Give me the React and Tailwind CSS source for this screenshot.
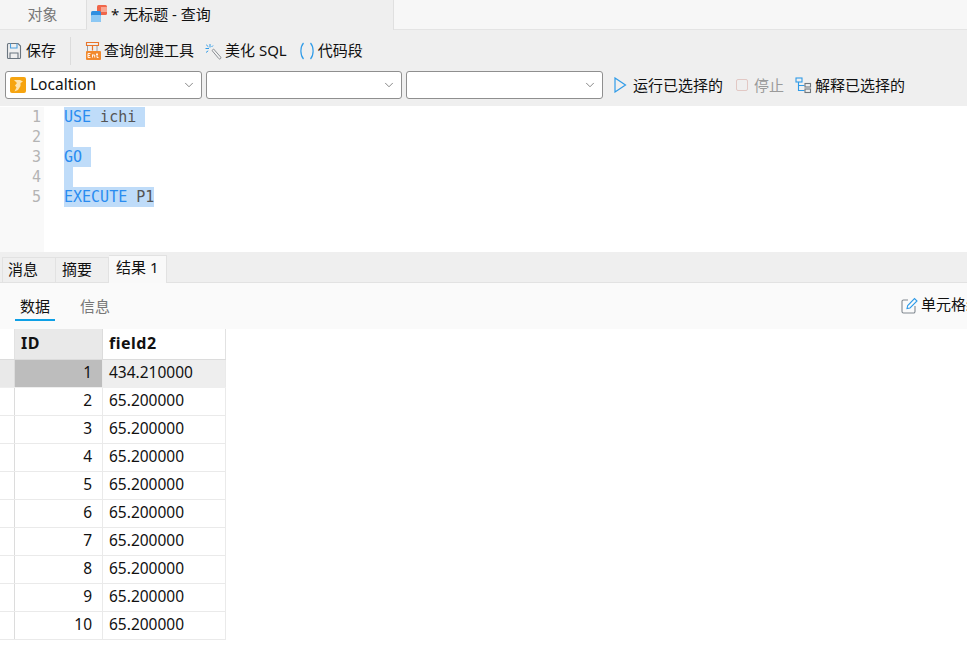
import { ChevronDown } from 'lucide-react';

const rows = [
  ['1', '434.210000'],
  ['2', '65.200000'],
  ['3', '65.200000'],
  ['4', '65.200000'],
  ['5', '65.200000'],
  ['6', '65.200000'],
  ['7', '65.200000'],
  ['8', '65.200000'],
  ['9', '65.200000'],
  ['10', '65.200000'],
];

function SaveIcon() {
  return (
    <svg width="16" height="18" viewBox="0 0 16 18" fill="none" stroke="#6b7680" strokeWidth="1.1">
      <path d="M2.5 1.5h9.5l2.5 2.5v11.5a1 1 0 0 1-1 1h-11a1 1 0 0 1-1-1v-13a1 1 0 0 1 1-1z" />
      <path d="M4.5 1.5v4.5h6.5v-4.5" stroke="#4a9fe0" />
      <path d="M4 16.5v-5.5h8v5.5" />
    </svg>
  );
}

function BuilderIcon() {
  return (
    <svg width="18" height="20" viewBox="0 0 18 20" fill="none">
      <path d="M2.5 1.5h12v3h-12z" stroke="#e8742a" strokeWidth="1.1" />
      <path d="M8.5 4.5v5" stroke="#e8742a" strokeWidth="1.2" />
      <path d="M3.5 5v5M13 5v5" stroke="#9aa0a6" strokeWidth="1" />
      <rect x="2" y="10" width="15" height="9" rx="1" fill="#f28a2e" />
      <path d="M4 12.5h2.5M4 14.5h2M4 16.5h2.5M4 12.5v4M8.5 16.5v-3M8.5 14h2.2v2.5M13 12v4.5h1.5M12 13.5h2" stroke="#fff" strokeWidth="0.9" />
    </svg>
  );
}

function WandIcon() {
  return (
    <svg width="17" height="17" viewBox="0 0 17 17" fill="none">
      <path d="M7 7.5l1.6-1.5 7 8a1 1 0 0 1-1.8 1.6z" stroke="#8b8f94" strokeWidth="1" fill="#f3f3f3" />
      <path d="M5 1v3.5M0.5 5.5h3.5M8 2.5l-1.5 1.5M1 9.5l2.2-1.7M1.2 1.8l2.2 2" stroke="#2f9be8" strokeWidth="1" />
    </svg>
  );
}

function SnippetIcon() {
  return (
    <svg width="16" height="18" viewBox="0 0 16 18" fill="none" stroke="#2f9be8" strokeWidth="1.2">
      <path d="M4.5 1C1 5 1 13 4.5 17" />
      <path d="M11.5 1C15 5 15 13 11.5 17" />
    </svg>
  );
}

function QueryTabIcon() {
  return (
    <svg width="17" height="18" viewBox="0 0 17 18">
      <rect x="6" y="0" width="10" height="10" rx="1.5" fill="#f0664a" />
      <rect x="10" y="2" width="6" height="5" fill="#f9a48f" />
      <rect x="0" y="6" width="10" height="11" rx="1.5" fill="#2f8fe0" />
      <rect x="0" y="10" width="10" height="7" rx="1" fill="#8cc8f4" />
    </svg>
  );
}

function ConnectionIcon() {
  return (
    <svg width="16" height="16" viewBox="0 0 16 16">
      <rect width="16" height="16" rx="2" fill="#f6a410" />
      <path d="M4 3h6l3 1.500-2.500 1.500v3l-2.500 4-3.500 1.500 2-4-1.500-2 2-2.500z" fill="#fde3b0" />
    </svg>
  );
}

function RunIcon() {
  return (
    <svg width="13" height="16" viewBox="0 0 13 16" fill="none" stroke="#2f9be8" strokeWidth="1.2">
      <path d="M1 1l10.500 7-10.500 7z" />
    </svg>
  );
}

function ExplainIcon() {
  return (
    <svg width="17" height="17" viewBox="0 0 17 17" fill="none" strokeWidth="1.1">
      <rect x="1" y="1" width="6" height="4" stroke="#2f9be8" />
      <path d="M3.500 5v8.500h6M3.500 8.500h6" stroke="#2f9be8" />
      <rect x="10" y="6.500" width="5.500" height="3.500" stroke="#70777e" />
      <rect x="10" y="12" width="5.500" height="3.500" stroke="#70777e" />
    </svg>
  );
}

function EditIcon() {
  return (
    <svg width="17" height="17" viewBox="0 0 17 17" fill="none" strokeWidth="1.1">
      <path d="M7 3H2.500a1.500 1.500 0 0 0-1.500 1.500v10a1.500 1.500 0 0 0 1.500 1.500h10a1.500 1.500 0 0 0 1.500-1.500V9" stroke="#808890" />
      <path d="M6 11.500l.7-3L13.500 1.500l2.500 2.500-7 7z" stroke="#2f9be8" />
    </svg>
  );
}

function Select({ width, children }) {
  return (
    <div className={`${width} h-[28px] bg-white border border-[#8f8f8f] rounded-[3px] flex items-center pl-[4px] pr-[5px] gap-[4px]`}>
      {children}
      <ChevronDown size={14} strokeWidth={1.2} className="ml-auto text-[#555]" />
    </div>
  );
}

function CodeLine({ n, children }) {
  return (
    <div className="flex h-[20px] leading-[20px]">
      <div className="w-[44px] shrink-0 bg-[#f9f9f9] text-[#b4b4b4] text-right pr-[3px]">{n}</div>
      <div className="pl-[20px] whitespace-pre">{children}</div>
    </div>
  );
}

export default function App() {
  return (
    <div className="w-[967px] h-[661px] overflow-hidden bg-white text-[15px] leading-[20px] text-[#111] font-['Noto_Sans','Noto_Sans_CJK_SC',sans-serif]">
      {/* top tabs */}
      <div className="flex h-[30px] bg-[#f7f7f7] border-b border-[#e4e4e4]">
        <div className="w-[87px] h-[29px] flex items-center justify-center pr-[1px] pb-[2px] text-[#777] bg-[#f5f5f5] border-r border-[#dedede]">对象</div>
        <div className="w-[307px] h-[30px] flex items-center gap-[3px] pl-[4px] pb-[2px] bg-[#efefef] border-r border-[#e0e0e0]">
          <QueryTabIcon />
          <span>* 无标题 - 查询</span>
        </div>
      </div>

      {/* toolbar */}
      <div className="h-[76px] bg-[#efefef] pt-[7px]">
        <div className="flex items-center h-[28px]">
          <div className="flex items-center gap-[4px] pl-[6px] w-[71px] h-[28px] border-r border-[#dcdcdc] [&>span]:-mt-[2px]">
            <SaveIcon />
            <span>保存</span>
          </div>
          <div className="flex items-center gap-[2px] ml-[13px] [&>span]:-mt-[2px]">
            <BuilderIcon />
            <span>查询创建工具</span>
          </div>
          <div className="flex items-center gap-[3px] ml-[11px] [&>span]:-mt-[2px]">
            <WandIcon />
            <span>美化 SQL</span>
          </div>
          <div className="flex items-center gap-[3px] ml-[12px] [&>span]:-mt-[2px]">
            <SnippetIcon />
            <span>代码段</span>
          </div>
        </div>
        <div className="flex items-center gap-[4px] pl-[5px] mt-[6px]">
          <Select width="w-[197px]">
            <ConnectionIcon />
            <span className="text-[15.500px] -mt-[2px]">Localtion</span>
          </Select>
          <Select width="w-[196px]" />
          <Select width="w-[197px]" />
          <div className="flex items-center gap-[6px] ml-[7px]">
            <RunIcon />
            <span>运行已选择的</span>
          </div>
          <div className="flex items-center gap-[6px] ml-[9px] text-[#9a9a9a]">
            <div className="w-[12px] h-[12px] rounded-[2px] border border-[#e2c8c4]" />
            <span>停止</span>
          </div>
          <div className="flex items-center gap-[3px] ml-[7px]">
            <ExplainIcon />
            <span>解释已选择的</span>
          </div>
        </div>
      </div>

      {/* editor */}
      <div className="h-[146px] pt-[1px] flex flex-col font-['DejaVu_Sans_Mono','Liberation_Mono',monospace] text-[15px] text-[#555]">
        <CodeLine n="1"><span className="bg-[#bfdcf9] inline-block h-[20px]"><span className="text-[#2a8cf0]">USE</span> ichi </span></CodeLine>
        <CodeLine n="2"><span className="bg-[#bfdcf9] inline-block h-[20px] w-[9px]" /></CodeLine>
        <CodeLine n="3"><span className="bg-[#bfdcf9] inline-block h-[20px]"><span className="text-[#2a8cf0]">GO</span> </span></CodeLine>
        <CodeLine n="4"><span className="bg-[#bfdcf9] inline-block h-[20px] w-[9px]" /></CodeLine>
        <CodeLine n="5"><span className="bg-[#bfdcf9] inline-block h-[20px]"><span className="text-[#2a8cf0]">EXECUTE</span> P1</span></CodeLine>
        <div className="w-[44px] flex-1 bg-[#f9f9f9]" />
      </div>

      {/* result tabs */}
      <div className="h-[31px] bg-[#efefef] border-b border-[#e2e2e2] flex items-end pl-[2px]">
        <div className="w-[54px] h-[25px] flex items-center pl-[5px] pb-[3px] border border-b-0 border-[#e2e2e2]">消息</div>
        <div className="w-[53px] h-[25px] flex items-center pl-[6px] pb-[3px] border border-l-0 border-b-0 border-[#e2e2e2]">摘要</div>
        <div className="w-[58px] h-[28px] flex items-center pl-[7px] pb-[5px] bg-[#f9f9f9] border border-l-0 border-b-0 border-[#e2e2e2] -mb-[1px]">结果 1</div>
      </div>

      {/* sub tabs */}
      <div className="h-[46px] bg-[#fafafa] flex pl-[15px] relative">
        <div className="w-[40px] h-[38px] flex items-end justify-center pb-[3px] border-b-2 border-[#0ea0e6]">数据</div>
        <div className="h-[38px] flex items-end pb-[5px] ml-[25px] text-[#777]">信息</div>
        <div className="flex items-center gap-[3px] absolute left-[901px] top-[4px] h-[36px] whitespace-nowrap">
          <EditIcon />
          <span className="-mt-[2px]">单元格编辑器</span>
        </div>
      </div>

      {/* grid */}
      <div className="w-[226px] text-[15.500px]">
        <div className="flex h-[31px] border-b border-[#dcdcdc] text-[16px] tracking-[0.5px] font-bold">
          <div className="w-[15px] border-r border-[#e2e2e2]" />
          <div className="w-[88px] bg-[#e9e9e9] border-r border-[#dcdcdc] flex items-center pl-[6px] pb-[2px]">ID</div>
          <div className="w-[123px] bg-white border-r border-[#e2e2e2] flex items-center pl-[6px] pb-[2px]">field2</div>
        </div>
        {rows.map(([id, val], i) => (
          <div key={id} className={`flex h-[28px] border-b ${i === 0 ? 'bg-[#eeeeee] border-[#eeeeee]' : 'border-[#eaeaea]'}`}>
            <div className={`w-[15px] border-r border-[#dcdcdc] ${i === 0 ? 'bg-[#e9e9e9]' : 'bg-white'}`} />
            <div className={`w-[88px] border-r border-[#eaeaea] flex items-center justify-end pr-[10px] pb-[4px] ${i === 0 ? 'bg-[#bdbdbd]' : ''}`}>{id}</div>
            <div className="w-[123px] border-r border-[#eaeaea] flex items-center pl-[6px] pb-[4px]">{val}</div>
          </div>
        ))}
      </div>
    </div>
  );
}
